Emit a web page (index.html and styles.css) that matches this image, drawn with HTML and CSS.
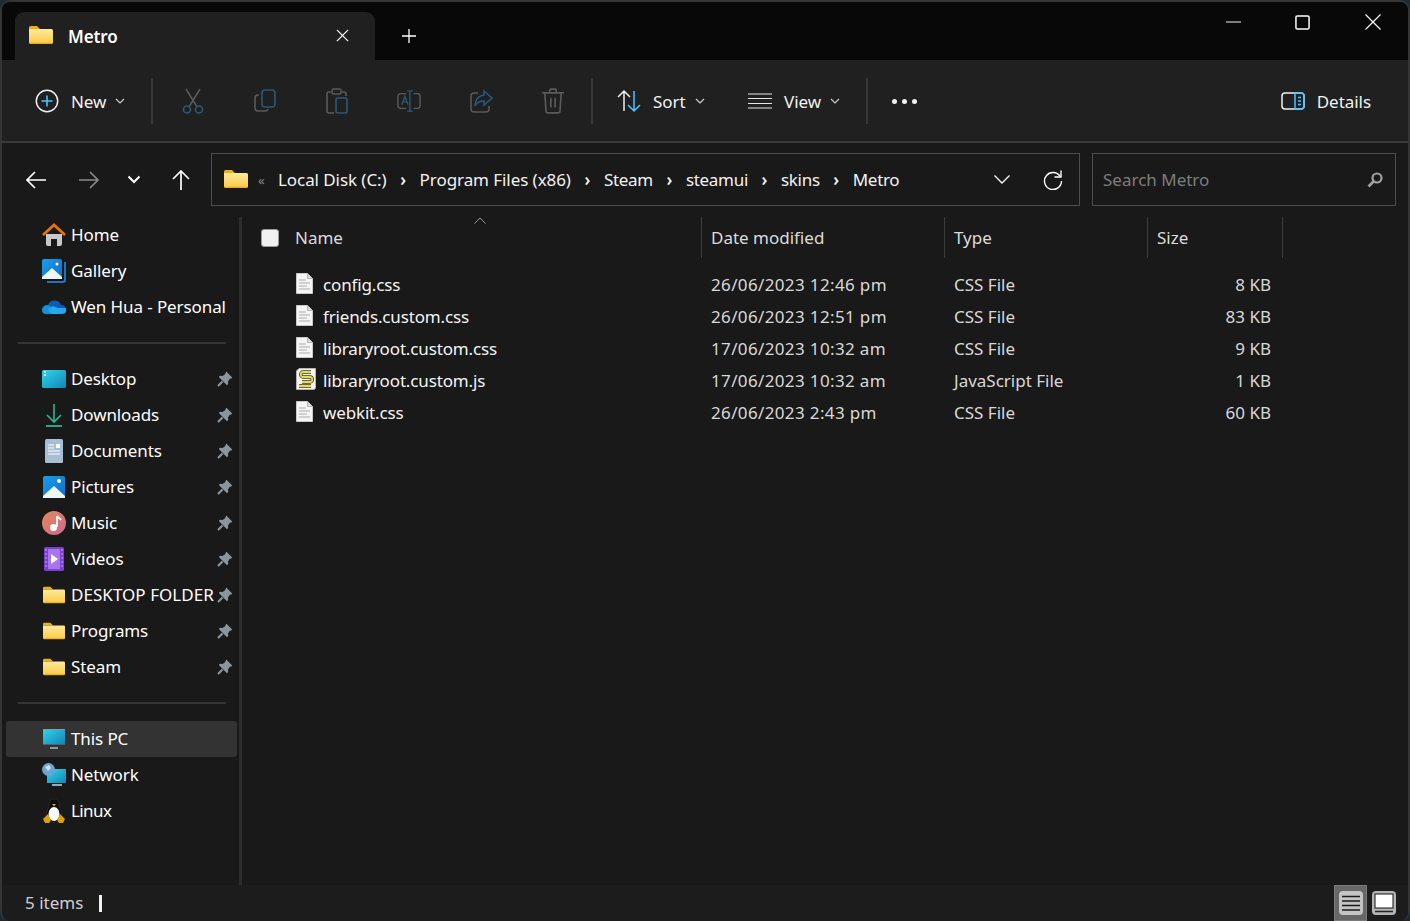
FILE: index.html
```html
<!DOCTYPE html>
<html lang="en">
<head>
    <meta charset="UTF-8">
    <title>Metro - File Explorer</title>
    <link rel="stylesheet" href="styles.css">
</head>
<body>

<svg class="defs" width="0" height="0">
    <defs>
        <linearGradient id="folderFill" x1="0" y1="0" x2="0" y2="1">
            <stop offset="0" stop-color="#ffe99a"/>
            <stop offset="0.85" stop-color="#fdcf55"/>
            <stop offset="1" stop-color="#eaa20f"/>
        </linearGradient>
        <linearGradient id="blueFill" x1="0" y1="0" x2="1" y2="1">
            <stop offset="0" stop-color="#1b9de8"/>
            <stop offset="1" stop-color="#0f6cc8"/>
        </linearGradient>
        <linearGradient id="screenFill" x1="0" y1="0" x2="1" y2="1">
            <stop offset="0" stop-color="#2fd6e8"/>
            <stop offset="1" stop-color="#1384b8"/>
        </linearGradient>
        <linearGradient id="musicFill" x1="0" y1="0" x2="1" y2="1">
            <stop offset="0" stop-color="#e8875a"/>
            <stop offset="1" stop-color="#c76a90"/>
        </linearGradient>
        <symbol id="folder" viewBox="0 0 24 18">
            <path d="M0 1.500A1.500 1.500 0 0 1 1.500 0h6.500l3 3H0z" fill="#f2ac18"/>
            <path d="M0 3h22.500A1.500 1.500 0 0 1 24 4.500V16.500A1.500 1.500 0 0 1 22.500 18h-21A1.500 1.500 0 0 1 0 16.500z" fill="url(#folderFill)"/>
        </symbol>
        <symbol id="pin" viewBox="0 0 16 16">
            <path d="M9.500 .8L15.200 6.500 14 7.700 13 7.500 11 10.500 11.200 13 10 14.200 1.800 6 3 4.800 5.500 5 8.500 3 8.300 2z" fill="#8d959c"/>
            <path d="M5.500 10.500L1 15" stroke="#8d959c" stroke-width="2.200"/>
        </symbol>
        <symbol id="doc" viewBox="0 0 17 21">
            <path d="M.5.500h11l5 5v15H.5z" fill="#f5f5f5" stroke="#c9c9c9"/>
            <path d="M11.500.500v5h5" fill="#dcdcdc" stroke="#b5b5b5"/>
            <path d="M3 7h7M3 10h11M3 13h8M3 16h11" stroke="#c4c4c4" stroke-width="1.300"/>
        </symbol>
    </defs>
</svg>

<div class="window">

    <div class="titlebar">
        <div class="tab">
            <svg class="tab-folder"><use href="#folder"/></svg>
            <span class="tab-title">Metro</span>
            <svg class="tab-close" viewBox="0 0 14 14"><path d="M1 1l12 12M13 1L1 13" stroke="#fff" stroke-width="1.300"/></svg>
        </div>
        <svg class="tab-new" viewBox="0 0 14 14"><path d="M7 0v14M0 7h14" stroke="#fff" stroke-width="1.300"/></svg>
        <div class="win-controls">
            <svg class="win-min" viewBox="0 0 16 2"><path d="M0 1h16" stroke="#fff" stroke-width="1"/></svg>
            <svg class="win-max" viewBox="0 0 16 16"><rect x="1" y="1" width="14" height="14" rx="1.500" fill="none" stroke="#fff" stroke-width="1.600"/></svg>
            <svg class="win-close" viewBox="0 0 16 16"><path d="M.5.500l15 15M15.500.500l-15 15" stroke="#fff" stroke-width="1.200"/></svg>
        </div>
    </div>

    <div class="toolbar">
        <div class="tool tool-new">
            <svg class="tool-icon" viewBox="0 0 24 24"><circle cx="12" cy="12" r="10.700" fill="none" stroke="#f0f0f0" stroke-width="1.500"/><path d="M12 6.500v11M6.500 12h11" stroke="#4cc2ff" stroke-width="1.600"/></svg>
            <span>New</span>
            <svg class="caret" viewBox="0 0 10 6"><path d="M1 1l4 4 4-4" fill="none" stroke="#ccc" stroke-width="1.200"/></svg>
        </div>
        <div class="tool-sep"></div>
        <div class="tool-icons">
            <div class="icon-btn"><svg viewBox="0 0 24 26"><path d="M5 1l10.500 17M19 1L8.500 18" stroke="#5a5a5a" stroke-width="1.500" fill="none"/><circle cx="6" cy="21.500" r="3.500" fill="none" stroke="#2a5878" stroke-width="1.600"/><circle cx="18" cy="21.500" r="3.500" fill="none" stroke="#2a5878" stroke-width="1.600"/></svg></div>
            <div class="icon-btn"><svg viewBox="0 0 24 24"><rect x="9" y="1" width="13" height="17" rx="3" fill="none" stroke="#2a5878" stroke-width="1.600"/><path d="M6 6H5a3 3 0 0 0-3 3v10a3 3 0 0 0 3 3h7a3 3 0 0 0 3-2" fill="none" stroke="#5a5a5a" stroke-width="1.600"/></svg></div>
            <div class="icon-btn"><svg viewBox="0 0 24 26"><path d="M6 4H4a2 2 0 0 0-2 2v17a2 2 0 0 0 2 2h5M17 4h2a2 2 0 0 1 2 2v2" fill="none" stroke="#5a5a5a" stroke-width="1.600"/><rect x="7" y="1" width="9" height="5" rx="1.500" fill="none" stroke="#5a5a5a" stroke-width="1.500"/><rect x="11" y="10" width="11" height="15" rx="2" fill="none" stroke="#2a5878" stroke-width="1.600"/></svg></div>
            <div class="icon-btn"><svg viewBox="0 0 26 24"><path d="M10 4H4a3 3 0 0 0-3 3v10a3 3 0 0 0 3 3h6M18 4h4a3 3 0 0 1 3 3v10a3 3 0 0 1-3 3h-4" fill="none" stroke="#5a5a5a" stroke-width="1.500"/><path d="M14 1v22M11 1h6M11 23h6M5 16l3.500-9L12 16M6 13h5" fill="none" stroke="#2a5878" stroke-width="1.500"/></svg></div>
            <div class="icon-btn"><svg viewBox="0 0 24 24"><path d="M9 4H5a3 3 0 0 0-3 3v13a3 3 0 0 0 3 3h12a3 3 0 0 0 3-3v-3" fill="none" stroke="#5a5a5a" stroke-width="1.500"/><path d="M15 2l8 7-8 7v-4c-4 0-7 1-9 5 0-6 3-10 9-11z" fill="none" stroke="#2a5878" stroke-width="1.600"/></svg></div>
            <div class="icon-btn"><svg viewBox="0 0 20 24"><path d="M0 4.500h20M7 4V2a1 1 0 0 1 1-1h4a1 1 0 0 1 1 1v2M2.500 5l1 16a2 2 0 0 0 2 2h9a2 2 0 0 0 2-2l1-16M8 9v9M12 9v9" fill="none" stroke="#5a5a5a" stroke-width="1.500"/></svg></div>
        </div>
        <div class="tool-sep"></div>
        <div class="tool tool-sort">
            <svg class="tool-icon" viewBox="0 0 24 22"><path d="M7 21V1M1 7l6-6 6 6" fill="none" stroke="#f0f0f0" stroke-width="1.500"/><path d="M17 1v20M11 15l6 6 6-6" fill="none" stroke="#4cc2ff" stroke-width="1.500"/></svg>
            <span>Sort</span>
            <svg class="caret" viewBox="0 0 10 6"><path d="M1 1l4 4 4-4" fill="none" stroke="#ccc" stroke-width="1.200"/></svg>
        </div>
        <div class="tool tool-view">
            <svg class="tool-icon" viewBox="0 0 24 16"><path d="M0 1h24M0 5.500h24M0 10.500h24M0 15h24" stroke="#e8e8e8" stroke-width="1.200"/></svg>
            <span>View</span>
            <svg class="caret" viewBox="0 0 10 6"><path d="M1 1l4 4 4-4" fill="none" stroke="#ccc" stroke-width="1.200"/></svg>
        </div>
        <div class="tool-sep"></div>
        <div class="dots"><i></i><i></i><i></i></div>
        <div class="tool tool-details">
            <svg class="tool-icon" viewBox="0 0 24 18"><rect x="1" y="1" width="22" height="16" rx="3" fill="none" stroke="#f0f0f0" stroke-width="1.500"/><path d="M14 1h6a3 3 0 0 1 3 3v10a3 3 0 0 1-3 3h-6z" fill="none" stroke="#4cc2ff" stroke-width="1.500"/><path d="M17 5.500h3M17 9h3M17 12.500h3" stroke="#4cc2ff" stroke-width="1.300"/></svg>
            <span>Details</span>
        </div>
    </div>

    <div class="addressbar">
        <div class="nav">
            <svg class="nav-back" viewBox="0 0 20 18"><path d="M20 9H1M9 1L1 9l8 8" fill="none" stroke="#fff" stroke-width="1.700"/></svg>
            <svg class="nav-forward" viewBox="0 0 20 18"><path d="M0 9h19M11 1l8 8-8 8" fill="none" stroke="#8a8a8a" stroke-width="1.700"/></svg>
            <svg class="nav-recent" viewBox="0 0 14 9"><path d="M1.500 1.500L7 7l5.500-5.500" fill="none" stroke="#fff" stroke-width="2"/></svg>
            <svg class="nav-up" viewBox="0 0 18 20"><path d="M9 20V1M1 9l8-8 8 8" fill="none" stroke="#fff" stroke-width="1.700"/></svg>
        </div>
        <div class="address">
            <svg class="addr-folder"><use href="#folder"/></svg>
            <span class="addr-more">«</span>
            <span class="crumb">Local Disk (C:)</span><span class="crumb-sep">›</span>
            <span class="crumb">Program Files (x86)</span><span class="crumb-sep">›</span>
            <span class="crumb tight">Steam</span><span class="crumb-sep">›</span>
            <span class="crumb tight">steamui</span><span class="crumb-sep">›</span>
            <span class="crumb tight">skins</span><span class="crumb-sep">›</span>
            <span class="crumb tight">Metro</span>
            <svg class="addr-down" viewBox="0 0 16 9"><path d="M.5.500L8 8 15.500.500" fill="none" stroke="#fff" stroke-width="1.300"/></svg>
            <svg class="addr-refresh" viewBox="0 0 20 20"><path d="M17.200 6.500A8.500 8.500 0 1 0 18.500 11" fill="none" stroke="#fff" stroke-width="1.400"/><path d="M18 .5v6.500h-6.500" fill="none" stroke="#fff" stroke-width="1.400"/></svg>
        </div>
        <div class="search">
            <span>Search Metro</span>
            <svg class="search-icon" viewBox="0 0 16 16"><circle cx="10" cy="6" r="4.500" fill="none" stroke="#a0a0a0" stroke-width="2.200"/><path d="M6.500 9.500L1.500 14.500" stroke="#a0a0a0" stroke-width="2.600"/></svg>
        </div>
    </div>

    <div class="body">
        <nav class="sidebar">
            <div class="nav-item">
                <svg class="item-icon" viewBox="0 0 24 24"><path d="M4 11h16v10a2 2 0 0 1-2 2h-3v-7H9v7H6a2 2 0 0 1-2-2z" fill="#c9c9c9"/><path d="M1 12L12 2l11 10" fill="none" stroke="#e8710a" stroke-width="2.800"/></svg>
                <span>Home</span>
            </div>
            <div class="nav-item">
                <svg class="item-icon" viewBox="0 0 24 24"><path d="M23 3v18a2 2 0 0 1-2 2H5" fill="none" stroke="#2671bd" stroke-width="2"/><rect x="0" y="0" width="20" height="20" rx="2" fill="url(#blueFill)"/><path d="M0 18L10 9l10 9v2H0z" fill="#eef6fd"/><circle cx="15" cy="5" r="1.500" fill="#fff"/></svg>
                <span>Gallery</span>
            </div>
            <div class="nav-item">
                <svg class="item-icon" viewBox="0 0 24 16"><path d="M6 6a7 7 0 0 1 13 0 4.500 4.500 0 0 1 5 4H6z" fill="#0a5cb5"/><path d="M0 11a5 5 0 0 1 8-4l8 8H4a4 4 0 0 1-4-4z" fill="#1490df"/><path d="M6 10l5-3 5 2h8a4 4 0 0 1-4 6H9z" fill="#28a8ea"/></svg>
                <span>Wen Hua - Personal</span>
            </div>
            <div class="nav-divider"></div>
            <div class="nav-item">
                <svg class="item-icon" viewBox="0 0 24 18"><rect width="24" height="18" rx="1.500" fill="url(#screenFill)"/><path d="M2 2h2M2 5h2" stroke="#fff" stroke-width="1.500"/></svg>
                <span>Desktop</span>
                <svg class="pin"><use href="#pin"/></svg>
            </div>
            <div class="nav-item">
                <svg class="item-icon" viewBox="0 0 24 24"><path d="M12 1v18M5 12l7 7 7-7" fill="none" stroke="#2bb68e" stroke-width="1.600"/><path d="M4 23h16" stroke="#2bb68e" stroke-width="1.800"/></svg>
                <span>Downloads</span>
                <svg class="pin"><use href="#pin"/></svg>
            </div>
            <div class="nav-item">
                <svg class="item-icon" viewBox="0 0 24 24"><rect x="3" y="0" width="18" height="24" rx="1.500" fill="#a8bdd6"/><path d="M6 6h6M6 9h6M6 12h12M6 15h12" stroke="#fff" stroke-width="1.200"/><rect x="14" y="5" width="4" height="4" fill="#fff"/></svg>
                <span>Documents</span>
                <svg class="pin"><use href="#pin"/></svg>
            </div>
            <div class="nav-item">
                <svg class="item-icon" viewBox="0 0 24 24"><rect x="1" y="1" width="22" height="22" rx="2" fill="url(#blueFill)"/><path d="M1 21L12 11l11 10v2H1z" fill="#eef6fd"/><circle cx="17" cy="6" r="2" fill="#fff"/></svg>
                <span>Pictures</span>
                <svg class="pin"><use href="#pin"/></svg>
            </div>
            <div class="nav-item">
                <svg class="item-icon" viewBox="0 0 24 24"><circle cx="12" cy="12" r="12" fill="url(#musicFill)"/><path d="M15 5v11" stroke="#fff" stroke-width="1.800"/><path d="M15 5c1 2 3 2 4 4" fill="none" stroke="#fff" stroke-width="1.800"/><circle cx="11.500" cy="16.500" r="3.500" fill="#fff"/></svg>
                <span>Music</span>
                <svg class="pin"><use href="#pin"/></svg>
            </div>
            <div class="nav-item">
                <svg class="item-icon" viewBox="0 0 24 24"><rect x="2" y="0" width="20" height="24" rx="1.500" fill="#7b3fd4"/><rect x="6" y="2" width="12" height="20" fill="#a875ea"/><path d="M9 7l7 5-7 5z" fill="#fff"/><path d="M3.500 3h1M3.500 7h1M3.500 11h1M3.500 15h1M3.500 19h1M19.500 3h1M19.500 7h1M19.500 11h1M19.500 15h1M19.500 19h1" stroke="#e2d2f8" stroke-width="1.500"/></svg>
                <span>Videos</span>
                <svg class="pin"><use href="#pin"/></svg>
            </div>
            <div class="nav-item">
                <svg class="item-folder"><use href="#folder"/></svg>
                <span class="caps">DESKTOP FOLDER</span>
                <svg class="pin"><use href="#pin"/></svg>
            </div>
            <div class="nav-item">
                <svg class="item-folder"><use href="#folder"/></svg>
                <span>Programs</span>
                <svg class="pin"><use href="#pin"/></svg>
            </div>
            <div class="nav-item">
                <svg class="item-folder"><use href="#folder"/></svg>
                <span>Steam</span>
                <svg class="pin"><use href="#pin"/></svg>
            </div>
            <div class="nav-divider"></div>
            <div class="nav-item selected">
                <svg class="item-icon" viewBox="0 0 24 24"><rect x="1" y="2" width="22" height="15" fill="url(#screenFill)"/><path d="M1 2.500h22" stroke="#8a9aa5"/><path d="M1 17.500h22" stroke="#55616a"/><path d="M8 21h8" stroke="#8a9aa5" stroke-width="2"/></svg>
                <span>This PC</span>
            </div>
            <div class="nav-item">
                <svg class="item-icon" viewBox="0 0 24 24"><rect x="5" y="6" width="19" height="14" fill="url(#screenFill)"/><path d="M10 22h10" stroke="#9aa7b0" stroke-width="2"/><circle cx="6.500" cy="6.500" r="6.500" fill="#6aa5d6"/><path d="M3 4l4-2 2 3-3 3z" fill="#cfe2f2"/></svg>
                <span>Network</span>
            </div>
            <div class="nav-item">
                <svg class="item-icon" viewBox="0 0 24 24"><path d="M12 0c3.500 0 5 2.500 5 6 0 3 3 6 3 11l-3 6H7l-3-6c0-5 3-8 3-11 0-3.500 1.500-6 5-6z" fill="#0c0c0c" stroke="#3a3a3a" stroke-width=".6"/><ellipse cx="12" cy="15" rx="5.500" ry="7" fill="#fff"/><path d="M10 5h4l-2 2.500z" fill="#e5a50a"/><path d="M1 20l5-5 3 6-2 3H3zM23 20l-5-5-3 6 2 3h4z" fill="#dd9f0c"/></svg>
                <span class="narrow">Linux</span>
            </div>
        </nav>

        <div class="sidebar-bar"></div>

        <main class="files">
            <div class="sort-mark"><svg viewBox="0 0 12 7"><path d="M.5 6.500L6 1l5.500 5.500" fill="none" stroke="#9a9a9a" stroke-width="1"/></svg></div>
            <div class="file-head">
                <div class="col-name">
                    <span class="check"></span>
                    <span>Name</span>
                </div>
                <div class="col">Date modified</div>
                <div class="col">Type</div>
                <div class="col">Size</div>
            </div>
            <div class="file-row">
                <div class="file-name"><svg class="doc"><use href="#doc"/></svg><span>config.css</span></div>
                <div class="cell date">26/06/2023 12:46 pm</div>
                <div class="cell">CSS File</div>
                <div class="cell size">8 KB</div>
            </div>
            <div class="file-row">
                <div class="file-name"><svg class="doc"><use href="#doc"/></svg><span>friends.custom.css</span></div>
                <div class="cell date">26/06/2023 12:51 pm</div>
                <div class="cell">CSS File</div>
                <div class="cell size">83 KB</div>
            </div>
            <div class="file-row">
                <div class="file-name"><svg class="doc"><use href="#doc"/></svg><span>libraryroot.custom.css</span></div>
                <div class="cell date">17/06/2023 10:32 am</div>
                <div class="cell">CSS File</div>
                <div class="cell size">9 KB</div>
            </div>
            <div class="file-row">
                <div class="file-name">
                    <svg class="doc js" viewBox="0 0 20 22"><path d="M3 .500h16.500v19a2 2 0 0 1-2 2H.5V3z" fill="#f4f4f4" stroke="#b5b5b5"/><path d="M15 4H7C4 4 4 9 7 9h7c3 0 3 5 0 5H6M3 18h12" fill="none" stroke="#3a3a20" stroke-width="3.400"/><path d="M15 4H7C4 4 4 9 7 9h7c3 0 3 5 0 5H6M3 18h12" fill="none" stroke="#e9dc55" stroke-width="1.800"/></svg>
                    <span>libraryroot.custom.js</span>
                </div>
                <div class="cell date">17/06/2023 10:32 am</div>
                <div class="cell">JavaScript File</div>
                <div class="cell size">1 KB</div>
            </div>
            <div class="file-row">
                <div class="file-name"><svg class="doc"><use href="#doc"/></svg><span>webkit.css</span></div>
                <div class="cell date">26/06/2023 2:43 pm</div>
                <div class="cell">CSS File</div>
                <div class="cell size">60 KB</div>
            </div>
        </main>
    </div>

    <div class="statusbar">
        <span class="status-count">5 items</span>
        <span class="status-bar-mark"></span>
        <div class="view-switch">
            <div class="view-btn active">
                <svg viewBox="0 0 24 24"><rect width="24" height="24" rx="4" fill="#c4c4c4"/><path d="M3 5.500h18M3 10h18M3 14.500h18M3 19h18" stroke="#1a1a1a" stroke-width="1.400"/></svg>
            </div>
            <div class="view-btn">
                <svg viewBox="0 0 24 24"><rect width="24" height="24" rx="4" fill="#b5b5b5"/><rect x="3" y="3" width="18" height="14" fill="#fff" stroke="#111"/><path d="M3 20.500h18" stroke="#222" stroke-width="1.400"/></svg>
            </div>
        </div>
    </div>

</div>

</body>
</html>
```

FILE: styles.css
```css
* {
    box-sizing: border-box;
}

html, body {
    height: 100%;
}

body {
    margin: 0;
    background-color: #1e2932;
    font-family: "Noto Sans", "Open Sans", sans-serif;
    font-size: 17px;
    color: #fff;
    overflow: hidden;
}

.defs {
    position: absolute;
}

svg {
    display: block;
    flex: none;
}

.window {
    height: 921px;
    display: flex;
    flex-direction: column;
    border: 2px solid #353535;
    border-bottom: none;
    border-radius: 10px;
    overflow: hidden;
    background-color: #191919;
}

/* title bar */
.titlebar {
    height: 58px;
    flex: none;
    display: flex;
    align-items: flex-end;
    background-color: #080808;
    padding-left: 13px;
}

.tab {
    width: 360px;
    height: 48px;
    display: flex;
    align-items: center;
    padding-left: 14px;
    background-color: #202020;
    border-radius: 9px 9px 0 0;
}

.tab-folder {
    width: 24px;
    height: 18px;
    margin-top: -2px;
}

.tab-title {
    margin-left: 15px;
    font-weight: 600;
    letter-spacing: -0.1px;
}

.tab-close {
    width: 13px;
    height: 13px;
    margin-left: auto;
    margin-right: 26px;
    margin-top: -1px;
}

.tab-new {
    width: 14px;
    height: 14px;
    margin-left: 27px;
    margin-bottom: 17px;
}

.win-controls {
    margin-left: auto;
    align-self: flex-start;
    display: flex;
    align-items: center;
    height: 40px;
    padding-right: 27px;
}

.win-min {
    width: 15px;
    height: 2px;
}

.win-max {
    width: 15px;
    height: 15px;
    margin-left: 54px;
}

.win-close {
    width: 16px;
    height: 16px;
    margin-left: 55px;
}

/* toolbar */
.toolbar {
    height: 83px;
    flex: none;
    display: flex;
    align-items: center;
    padding-top: 1px;
    background-color: #202020;
    border-bottom: 2px solid #3a3a3a;
    color: #f2f2f2;
}

.tool {
    display: flex;
    align-items: center;
}

.tool-icon {
    width: 24px;
    height: 24px;
}

.tool span {
    margin-left: 12px;
    letter-spacing: -0.05px;
}

.caret {
    width: 10px;
    height: 6px;
    margin-left: 9px;
}

.tool-new {
    width: 149px;
    padding-left: 33px;
}

.tool-sep {
    width: 2px;
    height: 46px;
    background-color: #383838;
}

.tool-icons {
    display: flex;
    margin: 0 2px 0 4px;
}

.icon-btn {
    width: 72px;
    display: flex;
    justify-content: center;
}

.icon-btn svg {
    width: 24px;
    height: 26px;
}

.tool-sort {
    margin-left: 24px;
    width: 131px;
}

.tool-view {
    width: 118px;
}

.dots {
    display: flex;
    gap: 5px;
    margin-left: 24px;
}

.dots i {
    width: 5px;
    height: 5px;
    border-radius: 50%;
    background-color: #f2f2f2;
}

.tool-details {
    margin-left: auto;
    padding-right: 37px;
}

/* address row */
.addressbar {
    height: 74px;
    flex: none;
    display: flex;
    align-items: flex-start;
    padding-top: 10px;
    background-color: #191919;
}

.nav {
    width: 209px;
    height: 53px;
    display: flex;
    align-items: center;
    padding-left: 24px;
}

.nav-back, .nav-forward {
    width: 20px;
    height: 18px;
}

.nav-forward {
    margin-left: 33px;
}

.nav-recent {
    width: 14px;
    height: 9px;
    margin-left: 28px;
}

.nav-up {
    width: 18px;
    height: 20px;
    margin-left: 31px;
}

.address {
    width: 869px;
    height: 53px;
    display: flex;
    align-items: center;
    padding-left: 12px;
    border: 1px solid #4d4d4d;
    color: #f2f2f2;
}

.addr-folder {
    width: 24px;
    height: 18px;
    margin-top: -2px;
}

.addr-more {
    margin-left: 10px;
    width: 20px;
    font-size: 13px;
    color: #8a8a8a;
}

.crumb {
    letter-spacing: -0.07px;
}

.crumb.tight {
    letter-spacing: -0.3px;
}

.crumb-sep {
    width: 33px;
    text-align: center;
    font-weight: 600;
}

.addr-down {
    width: 16px;
    height: 9px;
    margin-left: auto;
}

.addr-refresh {
    width: 20px;
    height: 20px;
    margin-left: 33px;
    margin-right: 16px;
}

.search {
    width: 304px;
    height: 53px;
    margin-left: 12px;
    display: flex;
    align-items: center;
    padding: 0 12px 0 10px;
    border: 1px solid #4d4d4d;
    color: #7d7d7d;
}

.search-icon {
    width: 16px;
    height: 16px;
    margin-left: auto;
}

/* main area */
.body {
    flex: 1;
    min-height: 0;
    display: flex;
}

.sidebar {
    width: 235px;
    flex: none;
    padding-left: 4px;
}

.nav-item {
    height: 36px;
    display: flex;
    align-items: center;
    padding-left: 36px;
    border-radius: 3px;
}

.nav-item.selected {
    background-color: #333333;
}

.item-icon {
    width: 24px;
    height: 24px;
}

.item-folder {
    width: 22px;
    height: 18px;
    margin-left: 1px;
    margin-right: 1px;
}

.nav-item span {
    margin-left: 5px;
    padding-bottom: 2px;
    white-space: nowrap;
    letter-spacing: -0.1px;
}

.nav-item span.caps {
    letter-spacing: 0.04px;
}

.nav-item span.narrow {
    letter-spacing: -0.6px;
}

.pin {
    width: 16px;
    height: 16px;
    margin-left: auto;
    margin-right: 4px;
}

.nav-divider {
    height: 2px;
    margin: 17px 11px 17px 12px;
    background-color: #353535;
}

.sidebar-bar {
    width: 3px;
    flex: none;
    margin-left: 2px;
    margin-right: 1px;
    background-color: #2d2d2d;
}

.files {
    flex: 1;
    position: relative;
}

.sort-mark {
    position: absolute;
    left: 231px;
    top: 0;
}

.sort-mark svg {
    width: 12px;
    height: 7px;
}

.file-head, .file-row {
    display: grid;
    grid-template-columns: 458px 243px 203px 136px;
}

.file-head {
    height: 41px;
    margin-bottom: 10px;
    color: #dcdcdc;
}

.col-name {
    display: flex;
    align-items: center;
    padding: 0 0 0 18px;
    gap: 16px;
}

.col {
    display: flex;
    align-items: center;
    padding-left: 9px;
    border-left: 1px solid #3c3c3c;
}

.col:last-child {
    border-right: 1px solid #3c3c3c;
}

.check {
    width: 18px;
    height: 18px;
    border: 1px solid #9a9a9a;
    border-radius: 3px;
    background-color: #f0f0f0;
}

.file-row {
    height: 32px;
    align-items: center;
    color: #d8d8d8;
}

.file-name {
    display: flex;
    align-items: center;
    padding-left: 53px;
    color: #f4f4f4;
}

.file-name span {
    letter-spacing: -0.15px;
}

.doc {
    width: 17px;
    height: 21px;
    margin-right: 10px;
    margin-top: -2px;
}

.doc.js {
    width: 20px;
    height: 22px;
    margin-right: 7px;
}

.cell {
    padding-left: 10px;
}

.cell.date {
    letter-spacing: 0.36px;
}

.cell.size {
    padding: 0 12px 0 0;
    text-align: right;
}

/* status bar */
.statusbar {
    height: 36px;
    flex: none;
    display: flex;
    align-items: center;
    padding-left: 23px;
    background-color: #1c1c1c;
    color: #d0d0d0;
}

.status-count {
    padding-bottom: 2px;
}

.status-bar-mark {
    width: 3px;
    height: 17px;
    margin-left: 16px;
    background-color: #f0f0f0;
}

.view-switch {
    margin-left: auto;
    height: 100%;
    display: flex;
    padding-right: 8px;
}

.view-btn {
    width: 32px;
    display: flex;
    align-items: center;
    justify-content: center;
    margin-left: 1px;
}

.view-btn.active {
    width: 33px;
    background-color: #676767;
    border: 1px solid #7a7a7a;
}

.view-btn svg {
    width: 24px;
    height: 24px;
}
```
